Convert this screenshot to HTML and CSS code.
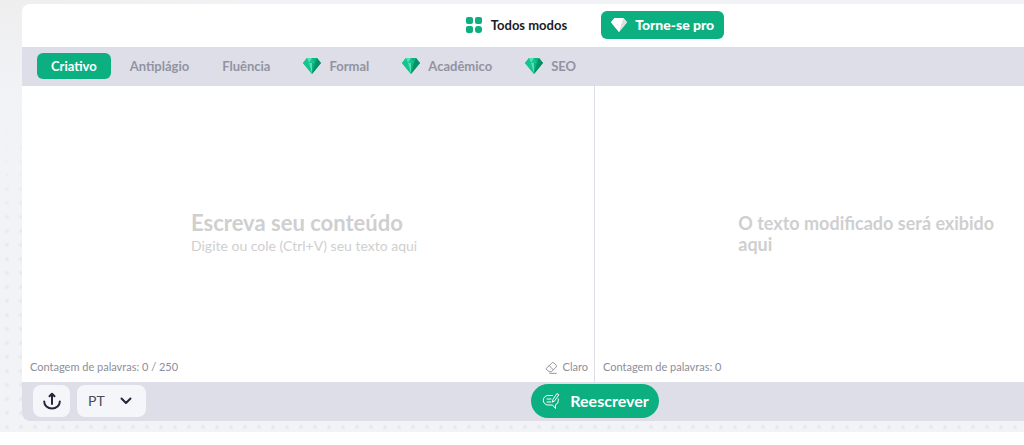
FILE: index.html
```html
<!DOCTYPE html>
<html lang="pt">
<head>
  <meta charset="UTF-8">
  <meta name="viewport" content="width=device-width, initial-scale=1.0">
  <title>Reescrever texto</title>
  <link rel="stylesheet" href="styles.css">
</head>
<body>

  <!-- diamante usado nos modos pro -->
  <svg class="sprite" aria-hidden="true">
    <symbol id="gem" viewBox="0 0 18 16">
      <path class="gem-base" d="M4 0h10l4 5-9 11L0 5z"/>
      <path class="gem-light" d="M4 0 6 5H0zM9 0l3 5H6zM6 5l3 11L0 5z"/>
      <path class="gem-shine" d="M9 0 6 5 4 0zM6 5h3v11z"/>
      <path class="gem-dark" d="M14 0l4 5h-6zM12 5h6L9 16z"/>
    </symbol>
  </svg>

  <main class="page">
    <div class="card">

      <!-- topo -->
      <header class="top-bar">
        <button type="button" class="all-modes">
          <svg class="grid-icon" viewBox="0 0 16 16" aria-hidden="true">
            <rect x="0" y="0" width="7" height="7" rx="2"/>
            <rect x="9" y="0" width="7" height="7" rx="2"/>
            <rect x="0" y="9" width="7" height="7" rx="2"/>
            <rect x="9" y="9" width="7" height="7" rx="3"/>
          </svg>
          Todos modos
        </button>
        <a href="#pro" class="pro-link">
          <svg class="gem gem-white" aria-hidden="true"><use href="#gem"/></svg>
          Torne-se pro
        </a>
      </header>

      <!-- modos -->
      <nav class="modes">
        <button type="button" class="mode active">Criativo</button>
        <button type="button" class="mode">Antiplágio</button>
        <button type="button" class="mode">Fluência</button>
        <button type="button" class="mode"><svg class="gem" aria-hidden="true"><use href="#gem"/></svg>Formal</button>
        <button type="button" class="mode"><svg class="gem" aria-hidden="true"><use href="#gem"/></svg>Acadêmico</button>
        <button type="button" class="mode"><svg class="gem" aria-hidden="true"><use href="#gem"/></svg>SEO</button>
      </nav>

      <!-- entrada e resultado -->
      <div class="editor">
        <section class="pane">
          <div class="pane-body">
            <textarea id="content" class="content" placeholder=" "></textarea>
            <label for="content" class="hint">
              <strong>Escreva seu conteúdo</strong>
              <span>Digite ou cole (Ctrl+V) seu texto aqui</span>
            </label>
          </div>
          <div class="pane-footer">
            <span>Contagem de palavras: 0 / 250</span>
            <button type="button" class="clear">
              <svg class="eraser-icon" viewBox="0 0 14 14" aria-hidden="true">
                <path d="M1.500 8 7.500 2a1.500 1.500 0 0 1 2 0l2.500 2.500a1.500 1.500 0 0 1 0 2l-5 5H4.500l-3-2.500zM4.500 5l4.500 4.500M5 13.300h7"/>
              </svg>
              Claro
            </button>
          </div>
        </section>
        <section class="pane">
          <div class="pane-body result">
            <p class="result-text">O texto modificado será exibido aqui</p>
          </div>
          <div class="pane-footer">
            <span>Contagem de palavras: 0</span>
          </div>
        </section>
      </div>

      <!-- ações -->
      <footer class="actions">
        <div class="tools">
          <button type="button" class="upload" aria-label="Enviar arquivo">
            <svg class="upload-icon" viewBox="0 0 18 18" aria-hidden="true">
              <path d="M9 12V2.500M6.500 4.200 9 1.700l2.500 2.500M1.200 9.500a7.800 7 0 0 0 15.600 0"/>
            </svg>
          </button>
          <div class="language">
            <select aria-label="Idioma">
              <option>PT</option>
              <option>EN</option>
              <option>ES</option>
            </select>
            <svg class="chevron" viewBox="0 0 12 8" aria-hidden="true"><path d="M1.500 1.500 6 6l4.500-4.500"/></svg>
          </div>
        </div>
        <button type="button" class="rewrite">
          <svg class="rewrite-icon" viewBox="0 0 18 18" aria-hidden="true">
            <path d="M10.500 3.500H6a4.700 4.700 0 0 0-4.700 4.700A4.700 4.700 0 0 0 6 13h4.500l3 3.500v-3.800a4 4 0 0 0 2.800-4.200V7M5 7h4M5 10h4M10.500 9.800l.5-2.500 4-5.800 1.800 1.300-4 5.800z"/>
          </svg>
          Reescrever
        </button>
      </footer>

    </div>
  </main>

</body>
</html>
```
FILE: styles.css
```css
* {
  box-sizing: border-box;
}

body {
  margin: 0;
  background-color: #ffffff;
  color: #1c1c28;
  font-family: Lato, 'Liberation Sans', sans-serif;
  font-size: 13px;
  line-height: 16px;
}

button,
select,
textarea {
  margin: 0;
  padding: 0;
  border: none;
  background: none;
  color: inherit;
  font: inherit;
}

button,
select {
  cursor: pointer;
}

svg {
  display: block;
  flex: none;
  fill: none;
  stroke-linecap: round;
  stroke-linejoin: round;
}

.sprite {
  position: absolute;
  width: 0;
  height: 0;
}

.page {
  padding: 4px 0 11px 22px;
  overflow: hidden;
  background-color: #f2f3f6;
  background-image:
    linear-gradient(160deg, #eeeeef 0, #f2f3f6 100px, transparent 240px),
    radial-gradient(circle, #e8e9ee 1px, transparent 3px);
  background-size: auto, 14px 14px;
}

/* o cartão continua além da borda direita */
.card {
  margin-right: -144px;
  overflow: hidden;
  border-radius: 8px;
  background-color: #ffffff;
}

/* topo */
.top-bar {
  display: flex;
  justify-content: center;
  align-items: center;
  gap: 34px;
  padding: 7px 0 8px;
}

.all-modes {
  display: flex;
  align-items: center;
  gap: 9px;
  font-weight: bold;
}

.grid-icon {
  width: 16px;
  height: 16px;
  fill: #0caf80;
}

.pro-link {
  display: flex;
  align-items: center;
  gap: 8px;
  padding: 6px 10px;
  border-radius: 6px;
  background-color: #0caf80;
  color: #ffffff;
  font-size: 14px;
  font-weight: 900;
  text-decoration: none;
}

.gem {
  width: 18px;
  height: 16px;
}

.gem-base { fill: #0bb37f; }
.gem-light { fill: #12c78f; }
.gem-shine { fill: #58dfb4; }
.gem-dark { fill: #078f66; }

.gem-white {
  width: 16px;
  filter: grayscale(1) brightness(2);
}

/* modos */
.modes {
  display: flex;
  align-items: center;
  gap: 5px;
  padding: 6px 15px 7px;
  background-color: #dddee7;
}

.mode {
  display: flex;
  align-items: center;
  gap: 8px;
  padding: 5px 14px;
  border-radius: 6px;
  color: #9293a1;
  font-weight: bold;
}

.mode.active {
  background-color: #0caf80;
  color: #ffffff;
}

/* editor */
.editor {
  display: grid;
  grid-template-columns: 1fr 1fr;
}

.pane:first-child {
  border-right: 1px solid #dddee7;
}

.pane-body {
  position: relative;
  height: 272px;
}

.content {
  display: block;
  width: 100%;
  height: 100%;
  padding: 12px;
  outline: none;
  resize: none;
}

.hint {
  position: absolute;
  inset: 22px 0 0;
  display: flex;
  flex-direction: column;
  justify-content: center;
  width: 234px;
  margin: 0 auto;
  color: #cfcfcf;
  font-size: 14px;
  line-height: 20px;
  pointer-events: none;
}

.hint strong {
  font-size: 22px;
  line-height: 26px;
}

.content:not(:placeholder-shown) + .hint {
  display: none;
}

.result {
  display: flex;
  justify-content: center;
  align-items: center;
  padding-top: 24px;
}

.result-text {
  width: 50%;
  margin: 0;
  color: #cfcfcf;
  font-size: 18px;
  font-weight: bold;
  line-height: 21px;
}

.pane-footer {
  display: flex;
  justify-content: space-between;
  padding: 1px 6px 7px 8px;
  color: #8d8e99;
  font-size: 11px;
}

.clear {
  display: flex;
  align-items: center;
  gap: 5px;
}

.eraser-icon {
  width: 13px;
  height: 13px;
  stroke: #8d8e99;
}

/* ações */
.actions {
  display: grid;
  grid-template-columns: 1fr auto 1fr;
  align-items: center;
  padding: 2px 11px 3px;
  background-color: #dddee7;
}

.tools {
  display: flex;
  gap: 7px;
}

.upload {
  display: flex;
  justify-content: center;
  align-items: center;
  width: 37px;
  height: 32px;
  border-radius: 8px;
  background-color: #f5f6f9;
}

.upload-icon {
  width: 18px;
  height: 18px;
  stroke: #25263a;
  stroke-width: 2;
}

.language {
  position: relative;
}

.language select {
  width: 69px;
  height: 32px;
  padding: 0 11px;
  border-radius: 8px;
  background-color: #f5f6f9;
  color: #4a4b59;
  font-size: 14px;
  appearance: none;
}

.chevron {
  position: absolute;
  top: 12px;
  right: 14px;
  width: 12px;
  height: 8px;
  stroke: #25263a;
  stroke-width: 2;
  pointer-events: none;
}

.rewrite {
  display: flex;
  align-items: center;
  gap: 10px;
  padding: 8px 10px 8px 11px;
  border-radius: 17px;
  background-color: #0caf80;
  color: #ffffff;
  font-size: 16px;
  font-weight: bold;
  line-height: 18px;
}

.rewrite-icon {
  width: 18px;
  height: 18px;
  stroke: #ffffff;
}
```
